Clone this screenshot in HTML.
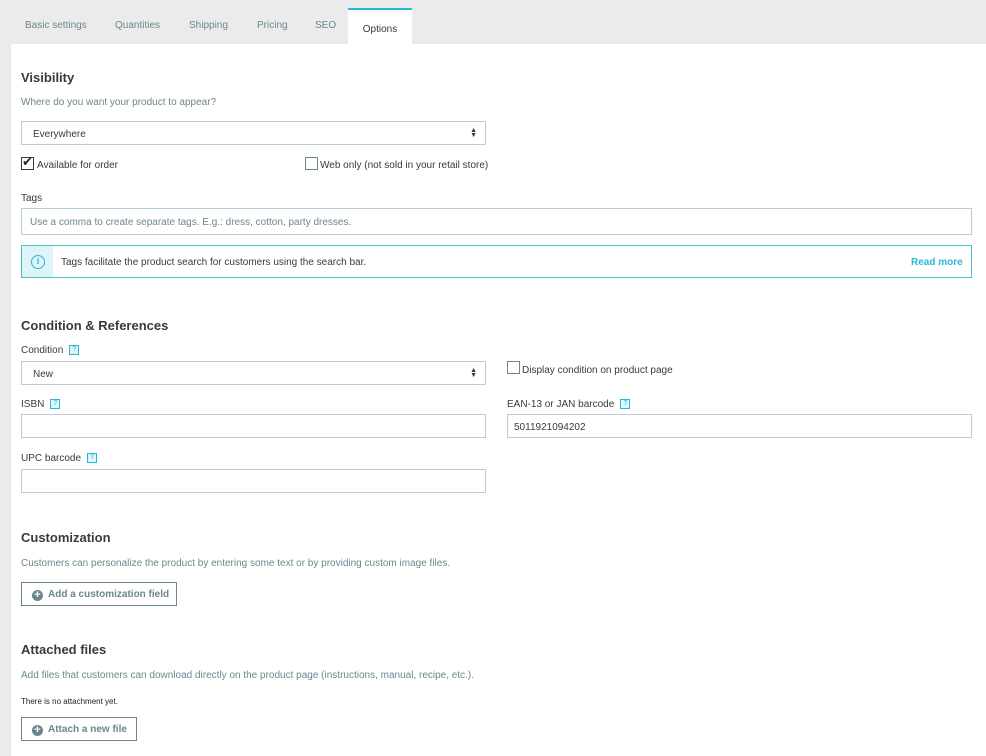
<!DOCTYPE html>
<html><head><style>
*{box-sizing:border-box;margin:0;padding:0}
body{width:986px;height:756px;background:#ebebeb;font-family:"Liberation Sans",sans-serif;color:#363a41;position:relative;overflow:hidden;font-size:10px}
.a{position:absolute}
.panel{left:11px;top:44px;width:975px;height:712px;background:#fff}
.tab{top:20px;font-size:10px;color:#6c868e}
.opt{left:348px;top:8px;width:64px;height:37px;background:#fff;border-top:2px solid #25b9d7;font-size:10px;color:#363a41;text-align:center;padding-top:14px}
h2{position:absolute;font-size:13px;font-weight:bold;color:#363a41}
.sub{font-size:10px;color:#6c868e}
.inp{border:1px solid #bbcdd2;background:#fff;height:24px;font-size:10px;padding:7px 11px;color:#363a41}
.arr{position:absolute;right:8px;top:6px;font-size:7px;line-height:5px;color:#363a41}
.cb{width:13px;height:13px;border:1px solid #6c868e;background:#fff}
.lbl{font-size:10px;color:#363a41}
.q{display:inline-block;width:10px;height:10px;border:1px solid #25b9d7;background:#e0f5f9;color:#25b9d7;font-size:7px;text-align:center;line-height:8px;margin-left:6px;vertical-align:middle}
.btn{border:1px solid #6c868e;background:#fff;height:24px;font-size:10px;font-weight:bold;color:#6c868e;padding:6px 0 0 10px}
.plus{display:inline-block;width:11px;height:11px;border-radius:50%;background:#6c868e;color:#fff;font-size:11px;line-height:11px;text-align:center;margin-right:5px;vertical-align:-1px;font-weight:bold}
</style></head><body>
<div class="a panel"></div>
<div class="a tab" style="left:25px">Basic settings</div>
<div class="a tab" style="left:115px">Quantities</div>
<div class="a tab" style="left:189px">Shipping</div>
<div class="a tab" style="left:257px">Pricing</div>
<div class="a tab" style="left:315px">SEO</div>
<div class="a opt">Options</div>

<h2 style="left:21px;top:70px">Visibility</h2>
<div class="a sub" style="left:21px;top:97px">Where do you want your product to appear?</div>
<div class="a inp" style="left:21px;top:121px;width:465px">Everywhere<div class="arr">▲<br>▼</div></div>
<div class="a cb" style="left:21px;top:157px;border-color:#363a41"></div>
<div class="a" style="left:22px;top:154px;font-size:13px;color:#222">✔</div>
<div class="a lbl" style="left:37px;top:160px">Available for order</div>
<div class="a cb" style="left:305px;top:157px"></div>
<div class="a lbl" style="left:320px;top:160px">Web only (not sold in your retail store)</div>

<div class="a lbl" style="left:21px;top:193px">Tags</div>
<div class="a inp" style="left:21px;top:208px;width:951px;height:27px;color:#6c868e;padding-top:8px;padding-left:8px">Use a comma to create separate tags. E.g.: dress, cotton, party dresses.</div>

<div class="a" style="left:21px;top:245px;width:951px;height:33px;border:1px solid #4fc0c7;background:#fff"></div>
<div class="a" style="left:22px;top:246px;width:31px;height:31px;background:#dff4f8"></div>
<div class="a" style="left:31px;top:255px;width:14px;height:14px;border:1.5px solid #25b9d7;border-radius:50%;color:#25b9d7;font-size:9px;text-align:center;line-height:11px;font-weight:bold">i</div>
<div class="a lbl" style="left:61px;top:257px">Tags facilitate the product search for customers using the search bar.</div>
<div class="a" style="left:911px;top:257px;font-size:10px;font-weight:bold;color:#25b9d7">Read more</div>

<h2 style="left:21px;top:318px">Condition &amp; References</h2>
<div class="a lbl" style="left:21px;top:345px">Condition<span class="q">?</span></div>
<div class="a inp" style="left:21px;top:361px;width:465px">New<div class="arr">▲<br>▼</div></div>
<div class="a cb" style="left:507px;top:361px"></div>
<div class="a lbl" style="left:522px;top:365px">Display condition on product page</div>

<div class="a lbl" style="left:21px;top:399px">ISBN<span class="q">?</span></div>
<div class="a inp" style="left:21px;top:414px;width:465px"></div>
<div class="a lbl" style="left:507px;top:399px">EAN-13 or JAN barcode<span class="q">?</span></div>
<div class="a inp" style="left:507px;top:414px;width:465px;padding-left:6px">5011921094202</div>
<div class="a lbl" style="left:21px;top:453px">UPC barcode<span class="q">?</span></div>
<div class="a inp" style="left:21px;top:469px;width:465px"></div>

<h2 style="left:21px;top:530px">Customization</h2>
<div class="a sub" style="left:21px;top:558px">Customers can personalize the product by entering some text or by providing custom image files.</div>
<div class="a btn" style="left:21px;top:582px;width:156px"><span class="plus">+</span>Add a customization field</div>

<h2 style="left:21px;top:642px">Attached files</h2>
<div class="a sub" style="left:21px;top:670px">Add files that customers can download directly on the product page (instructions, manual, recipe, etc.).</div>
<div class="a" style="left:21px;top:697px;font-size:8px;color:#222">There is no attachment yet.</div>
<div class="a btn" style="left:21px;top:717px;width:116px"><span class="plus">+</span>Attach a new file</div>
</body></html>
